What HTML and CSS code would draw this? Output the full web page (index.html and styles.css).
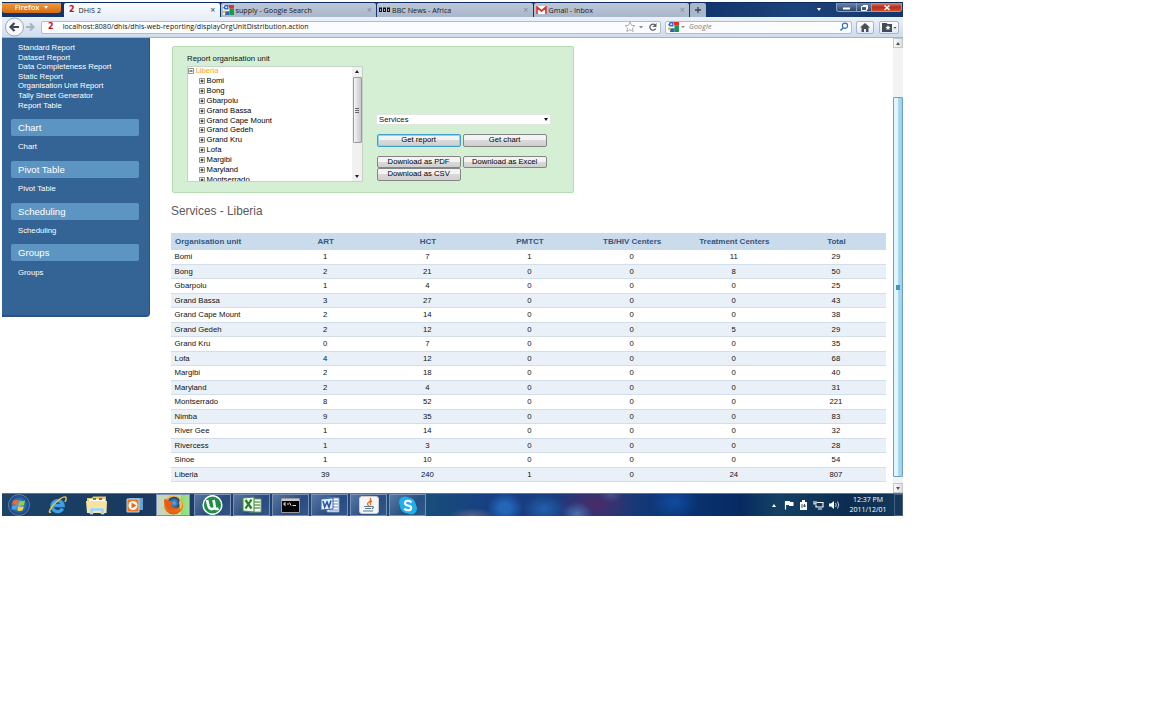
FILE: index.html
```
<!DOCTYPE html>
<html lang="en">
<head>
<meta charset="utf-8">
<title>DHIS 2</title>
<link rel="stylesheet" href="styles.css">
</head>
<body>
<svg width="0" height="0" class="defs">
  <defs>
    <linearGradient id="orange" x2="0" y2="1"><stop stop-color="#ffb347"/><stop offset="1" stop-color="#e05a08"/></linearGradient>
    <radialGradient id="globe"><stop stop-color="#58b4ee"/><stop offset="1" stop-color="#123a78"/></radialGradient>
    <symbol id="google" viewBox="0 0 12 11"><path fill="#fff" d="M0 0h12v11H0z"/><path fill="#2b62d1" d="M2 0h4v5H2L0 3z"/><circle cx="3.500" cy="2.500" r="1.200" fill="#e8effc"/><path fill="#e22c25" d="M6 0h6v4H7z"/><path fill="#159a45" d="M7 4h5v7H7z"/><path fill="#f4bd25" d="M0 6h3v3H0z"/><path fill="#2c62cc" d="M3 7h4v4H2z"/></symbol>
    <symbol id="plus" viewBox="0 0 6 6"><path d="M.5.5h5v5h-5z" fill="#fff" stroke="#777" stroke-width=".8"/><path d="M1.500 3h3M3 1.500v3" stroke="#111" stroke-width="1"/></symbol>
  </defs>
</svg>
<div class="screen">
  <header class="tabs">
    <div class="firefox">Firefox <i class="down"></i></div>
    <div class="tab active"><b class="two">2</b><span>DHIS 2</span><em>×</em></div>
    <div class="tab"><svg class="fav" width="11" height="10"><use href="#google"/></svg><span>supply - Google Search</span><em>×</em></div>
    <div class="tab"><svg class="fav" width="11" height="6" viewBox="0 0 11 6"><path d="M0 .5h3v4.500H0zM4 .5h3v4.500H4zM8 .5h3v4.500H8z" fill="#111"/><path d="M1 2h1v2H1zM5 2h1v2H5zM9 2h1v2H9z" fill="#aaa"/></svg><span>BBC News - Africa</span><em>×</em></div>
    <div class="tab"><svg class="fav" width="11" height="8" viewBox="0 0 11 8"><path fill="#fff" d="M0 0h11v8H0z"/><path d="M1 8V1l4.500 4L10 1v7" fill="none" stroke="#dc3832" stroke-width="1.700"/></svg><span>Gmail - Inbox</span><em>×</em></div>
    <div class="newtab"><svg width="8" height="8" viewBox="0 0 8 8"><path d="M4 1v6M1 4h6" stroke="#3c4655" stroke-width="1.300"/></svg></div>
    <i class="down tablist"></i>
    <div class="winbtns">
      <span><svg width="19" height="10"><path d="M6 5.500h7" stroke="#fff" stroke-width="2"/></svg></span>
      <span><svg width="14" height="10"><path d="M4.500 3.500h5v4h-5zM6 2.500h4.500v4" fill="none" stroke="#fff"/></svg></span>
      <span class="close"><svg width="29" height="10"><path d="M12.500 2.500l5 4.500m0-4.500l-5 4.500" stroke="#fff" stroke-width="1.500"/></svg></span>
    </div>
  </header>
  <nav class="navbar">
    <svg class="arrows" width="34" height="20" viewBox="0 0 34 20"><circle cx="12.500" cy="10" r="9" fill="#f7f9fc" stroke="#9ba8ba"/><path d="M17 10H9M12.500 6L8.500 10l4 4" fill="none" stroke="#3f4753" stroke-width="2.200"/><path d="M24 10h7M28 6.500l3.500 3.500-3.500 3.500" fill="none" stroke="#a9b2bf" stroke-width="2"/></svg>
    <div class="url"><b class="two">2</b><span>localhost:8080/dhis/dhis-web-reporting/displayOrgUnitDistribution.action</span>
      <svg class="urlicons" width="36" height="12" viewBox="0 0 36 12"><path d="M6 1l1.500 3.300 3.500.3-2.600 2.400.8 3.500L6 8.700l-3.200 1.800.8-3.500L1 4.600l3.500-.3z" fill="#fff" stroke="#a5a5a5" stroke-width=".9"/><path d="M15 5h4l-2 2.500z" fill="#888"/><path d="M31 4a3 3 0 1 0 .6 3.500" fill="none" stroke="#5c6168" stroke-width="1.300"/><path d="M32.500 2v4h-4z" fill="#5c6168"/></svg>
    </div>
    <div class="search"><svg width="11" height="10"><use href="#google"/></svg><i class="down grey"></i><span>Google</span><svg class="mag" width="10" height="10"><circle cx="6" cy="3.700" r="2.600" fill="none" stroke="#3a72ad" stroke-width="1.200"/><path d="M4 6L1.500 8.500" stroke="#3a72ad" stroke-width="1.600"/></svg></div>
    <div class="navbtn home"><svg width="10" height="9" viewBox="0 0 10 9"><path d="M5 0l5 4.500H8.500V9H6V6H4v3H1.500V4.500H0z" fill="#48505c"/></svg></div>
    <div class="navbtn mark"><svg width="15" height="9" viewBox="0 0 15 9"><path d="M0 0h4.500l1 1H10v8H0z" fill="#434b58"/><path d="M6 2l.8 1.800 1.700.2-1.300 1.200.4 1.800L6 6.100 4.400 7l.4-1.800L3.500 4l1.700-.2z" fill="#fff"/><path d="M11.500 4h3L13 5.800z" fill="#444"/></svg></div>
  </nav>
  <main class="page">
    <aside class="menu">
      <ul><li>Standard Report</li><li>Dataset Report</li><li>Data Completeness Report</li><li>Static Report</li><li>Organisation Unit Report</li><li>Tally Sheet Generator</li><li>Report Table</li></ul>
      <h2>Chart</h2><p>Chart</p>
      <h2>Pivot Table</h2><p>Pivot Table</p>
      <h2>Scheduling</h2><p>Scheduling</p>
      <h2>Groups</h2><p>Groups</p>
    </aside>
    <section class="content">
      <div class="criteria">
        <div class="unit">
          <label>Report organisation unit</label>
          <div class="treebox">
            <ul class="tree">
              <li class="root"><svg width="6" height="6" viewBox="0 0 6 6"><path d="M.5.5h5v5h-5z" fill="#fff" stroke="#777" stroke-width=".8"/><path d="M1.500 3h3" stroke="#111"/></svg>Liberia</li>
              <li><svg width="6" height="6"><use href="#plus"/></svg>Bomi</li><li><svg width="6" height="6"><use href="#plus"/></svg>Bong</li><li><svg width="6" height="6"><use href="#plus"/></svg>Gbarpolu</li><li><svg width="6" height="6"><use href="#plus"/></svg>Grand Bassa</li><li><svg width="6" height="6"><use href="#plus"/></svg>Grand Cape Mount</li><li><svg width="6" height="6"><use href="#plus"/></svg>Grand Gedeh</li><li><svg width="6" height="6"><use href="#plus"/></svg>Grand Kru</li><li><svg width="6" height="6"><use href="#plus"/></svg>Lofa</li><li><svg width="6" height="6"><use href="#plus"/></svg>Margibi</li><li><svg width="6" height="6"><use href="#plus"/></svg>Maryland</li><li><svg width="6" height="6"><use href="#plus"/></svg>Montserrado</li>
            </ul>
            <div class="treebar"><i class="up"></i><div class="treethumb"><i class="grip"></i></div><i class="down"></i></div>
          </div>
        </div>
        <div class="controls">
          <div class="select">Services<i class="down"></i></div>
          <div class="btns"><span class="btn focus">Get report</span><span class="btn">Get chart</span></div>
          <div class="btns"><span class="btn">Download as PDF</span><span class="btn">Download as Excel</span><span class="btn">Download as CSV</span></div>
        </div>
      </div>
      <h1>Services - Liberia</h1>
      <table>
        <thead><tr><th>Organisation unit</th><th>ART</th><th>HCT</th><th>PMTCT</th><th>TB/HIV Centers</th><th>Treatment Centers</th><th>Total</th></tr></thead>
        <tbody>
        <tr><td>Bomi</td><td>1</td><td>7</td><td>1</td><td>0</td><td>11</td><td>29</td></tr>
        <tr><td>Bong</td><td>2</td><td>21</td><td>0</td><td>0</td><td>8</td><td>50</td></tr>
        <tr><td>Gbarpolu</td><td>1</td><td>4</td><td>0</td><td>0</td><td>0</td><td>25</td></tr>
        <tr><td>Grand Bassa</td><td>3</td><td>27</td><td>0</td><td>0</td><td>0</td><td>43</td></tr>
        <tr><td>Grand Cape Mount</td><td>2</td><td>14</td><td>0</td><td>0</td><td>0</td><td>38</td></tr>
        <tr><td>Grand Gedeh</td><td>2</td><td>12</td><td>0</td><td>0</td><td>5</td><td>29</td></tr>
        <tr><td>Grand Kru</td><td>0</td><td>7</td><td>0</td><td>0</td><td>0</td><td>35</td></tr>
        <tr><td>Lofa</td><td>4</td><td>12</td><td>0</td><td>0</td><td>0</td><td>68</td></tr>
        <tr><td>Margibi</td><td>2</td><td>18</td><td>0</td><td>0</td><td>0</td><td>40</td></tr>
        <tr><td>Maryland</td><td>2</td><td>4</td><td>0</td><td>0</td><td>0</td><td>31</td></tr>
        <tr><td>Montserrado</td><td>8</td><td>52</td><td>0</td><td>0</td><td>0</td><td>221</td></tr>
        <tr><td>Nimba</td><td>9</td><td>35</td><td>0</td><td>0</td><td>0</td><td>83</td></tr>
        <tr><td>River Gee</td><td>1</td><td>14</td><td>0</td><td>0</td><td>0</td><td>32</td></tr>
        <tr><td>Rivercess</td><td>1</td><td>3</td><td>0</td><td>0</td><td>0</td><td>28</td></tr>
        <tr><td>Sinoe</td><td>1</td><td>10</td><td>0</td><td>0</td><td>0</td><td>54</td></tr>
        <tr><td>Liberia</td><td>39</td><td>240</td><td>1</td><td>0</td><td>24</td><td>807</td></tr>
        </tbody>
      </table>
    </section>
    <div class="scrollbar"><div class="sbtn"><i class="up"></i></div><div class="track"><div class="thumb"><i class="grip"></i></div></div><div class="sbtn"><i class="down"></i></div></div>
  </main>
  <footer class="taskbar">
    <div class="app start"><svg width="24" height="22" viewBox="0 0 24 22"><circle cx="12" cy="11" r="10.500" fill="url(#globe)" stroke="#6996b8" stroke-width=".8"/><path d="M6 7q3-2 5.500-.5L10.500 11Q8 9.500 5 11z" fill="#f06a2b"/><path d="M12.500 6.500Q15 8 18 6.500L17 11q-3 1.500-5.500.3z" fill="#9ccc3c"/><path d="M5 12q2.500-1.500 5.300 0L9.300 16Q7 14.500 4.500 16z" fill="#4ba3e6"/><path d="M11.300 12.300q2.500 1.200 5.500 0L15.800 16q-2.800 1.700-5.500.5z" fill="#fbd13a"/></svg></div>
    <div class="app ie"><svg width="22" height="21" viewBox="0 0 22 21"><path d="M15.500 13.500A5.500 5.500 0 1 1 16 10.500H6" fill="none" stroke="#3f9fe6" stroke-width="3.400"/><path d="M4 17C0 19 4 11 11 5.500S21 1 18 7" fill="none" stroke="#f3c63a" stroke-width="1.500"/></svg></div>
    <div class="app folder"><svg width="22" height="19" viewBox="0 0 22 19"><path d="M1 2h5l1-1.500h13V17H1z" fill="#e9c96b"/><path d="M3 3h16v3H3z" fill="#fff"/><path d="M7 2h3v2H7z" fill="#3c9a50"/><path d="M13 2h3v2h-3z" fill="#d84a35"/><path d="M0 5h21l-.5 12H1z" fill="#f7e3a0"/><path d="M4 18v-6h14v6h-3v-3H7v3z" fill="#9bd0ee" stroke="#d8eefa" stroke-width=".6"/></svg></div>
    <div class="app media"><svg width="18" height="16" viewBox="0 0 18 16"><path d="M3 1h14v12H3z" fill="#62a6d3"/><path d="M1 2h12v13H1z" fill="#f2731c" stroke="#b4d8ee"/><circle cx="7" cy="8.500" r="4.500" fill="#fff"/><path d="M5.500 5.500v6l5-3z" fill="#ee6814"/></svg></div>
    <div class="app win fox"><svg width="21" height="20" viewBox="0 0 21 20"><circle cx="10.500" cy="10" r="9.500" fill="url(#orange)"/><circle cx="11" cy="8" r="6.300" fill="url(#globe)"/><path d="M1 5q2-2 3 0l4 1 2 2-2 2q2 4 7 2-3 5-9 3Q1 12 1 5z" fill="#e85b12"/><path d="M17 4q4 6 0 11 0-5-1-7z" fill="#ffc531"/></svg></div>
    <div class="app win"><svg width="21" height="20" viewBox="0 0 21 20"><circle cx="10.500" cy="10" r="9.300" fill="#1f8f45" stroke="#fff" stroke-width="1.500"/><path d="M5 5l1.500 6q1 3.500 4 3 3-.5 2-4L11.500 5m1 7q1 3 4 1.500" fill="none" stroke="#fff" stroke-width="2.700"/></svg></div>
    <div class="app win"><svg width="20" height="18" viewBox="0 0 20 18"><path d="M7 3h12v13H7z" fill="#f8fbf5" stroke="#7a9c6a"/><path d="M10 6h8M10 9h8M10 12h8" stroke="#66a852" stroke-width="1.300"/><path d="M1 2l11-1v15L1 15z" fill="#eef7e8" stroke="#41903b"/><path d="M3.500 4l6 8.500m0-9l-6 9" stroke="#24812b" stroke-width="2.200"/></svg></div>
    <div class="app win"><svg width="19" height="15" viewBox="0 0 19 15"><path d="M.5.5h18v14H.5z" fill="#050505" stroke="#999"/><path d="M1 1h17v2H1z" fill="#c8c8c8"/><path d="M5 5H3v2h2M7 5v2M8.500 4.500l1.500 3M11.500 7.500H15" fill="none" stroke="#fff" stroke-width=".9"/></svg></div>
    <div class="app win"><svg width="20" height="18" viewBox="0 0 20 18"><path d="M7 2h12v14H7z" fill="#fff" stroke="#8298c0"/><path d="M12 5h6M12 8h6M12 11h6M9 14h9" stroke="#5b82c4" stroke-width="1.200"/><path d="M1 3l12-1v11L1 14z" fill="#e9f0fb" stroke="#3565ad"/><path d="M3 5l1.700 6L7 6l2 5 2-6.500" fill="none" stroke="#2458aa" stroke-width="1.600"/></svg></div>
    <div class="app win"><svg width="20" height="18" viewBox="0 0 20 18"><rect x=".5" y=".5" width="19" height="17" rx="2.500" fill="#f5f5f5" stroke="#ccc"/><path d="M11 2q2 2-1 4t0 4M13 5q-3 2-1 4" fill="none" stroke="#e36a25" stroke-width="1.300"/><path d="M5 10.500h8M6 12.500h6M4 15h10M13 10.500q3 0 0 2.500" fill="none" stroke="#5a7892" stroke-width="1.100"/></svg></div>
    <div class="app win"><svg width="20" height="19" viewBox="0 0 20 19"><circle cx="7" cy="6.500" r="6" fill="#1eb0ed"/><circle cx="13" cy="12.500" r="6" fill="#1eb0ed"/><circle cx="10" cy="9.500" r="8" fill="#1eb0ed"/><path d="M13.500 6.500Q12 4.500 9.500 4.700T7 7.200Q7 9 10 9.500t3.200 2.300q0 2.500-3 2.500T6.500 12.500" fill="none" stroke="#fff" stroke-width="2.100"/></svg></div>
    <div class="tray">
      <i class="up"></i>
      <svg width="10" height="10" viewBox="0 0 10 10"><path d="M1.500 1v8.500" stroke="#fff" stroke-width="1.200"/><path d="M2 1h4v1h3.500v4H5V5H2z" fill="#fff"/></svg>
      <svg width="9" height="10" viewBox="0 0 9 10"><path d="M1 2h2V0h3v2h2v8H1z" fill="#fff"/><path d="M3 4v4M4 6h3M5.500 4v3" stroke="#3e5570"/></svg>
      <svg width="11" height="10" viewBox="0 0 11 10"><path d="M4 2.500h6v4.500H3V5M1 1v3h2V1M5 9h4" fill="none" stroke="#fff" stroke-width="1.100"/></svg>
      <svg width="11" height="10" viewBox="0 0 11 10"><path d="M0 3.500h2L5 1v8L2 6.500H0z" fill="#fff"/><path d="M6.500 3q1.500 2 0 4M8.500 1.500q2.500 3.500 0 7" fill="none" stroke="#dbe4ed" stroke-width=".9"/></svg>
    </div>
    <div class="clock"><div>12:37 PM</div><div>2011/12/01</div></div>
    <div class="desktop"></div>
  </footer>
</div>
</body>
</html>
```
FILE: styles.css
```
* { box-sizing: border-box; }
body { margin: 0; background: #fff; font-family: "Liberation Sans", Arial, sans-serif; }
.defs { position: absolute; }
svg { display: block; flex: none; }
ul { list-style: none; margin: 0; padding: 0; }
.screen { width: 901px; height: 514px; margin: 2px 0 0 2px; display: flex; flex-direction: column; overflow: hidden; white-space: nowrap; }
.up, .down { display: block; flex: none; width: 0; height: 0; border: 2.5px solid transparent; }
.down { border-top: 3px solid currentColor; border-bottom: 0; }
.up { border-bottom: 3px solid currentColor; border-top: 0; }

/* Browser chrome */
.tabs { height: 15px; flex: none; display: flex; background: linear-gradient(90deg, #12366b 0, #12366b 78%, #1c437b 88%, #12366b); border-top: 1px solid #0b2c5d; font: 7.2px/12px "Open Sans", sans-serif; color: #1a1a1a; }
.firefox { width: 59px; height: 10px; margin-right: 2px; background: linear-gradient(#ee9a3e, #d66c10); border-radius: 0 0 3px 3px; color: #fff; font-weight: 600; font-size: 7.4px; line-height: 8px; display: flex; justify-content: center; align-items: flex-start; gap: 5px; }
.firefox .down { margin-top: 3px; }
.tab { width: 155.5px; height: 14px; margin-left: 1px; padding: 0 4px 1px 2px; display: flex; align-items: center; gap: 2px; background: linear-gradient(#bcc8d9, #a9b6c9); border-radius: 2px 2px 0 0; }
.tab.active { background: linear-gradient(#fafcff, #e9f0f9); padding-left: 5px; gap: 4px; }
.tab em { margin-left: auto; font-style: normal; font-size: 9px; color: #7f8b9b; }
.tab.active em { color: #444; }
.two { color: #c41220; font: bold 8px/10px "DejaVu Sans", sans-serif; }
.newtab { width: 16px; height: 14px; margin-left: 1px; background: #a9b7cb; display: flex; align-items: center; justify-content: center; border-radius: 2px 2px 0 0; }
.tablist { color: #fff; margin: 5px 0 0 111px; }
.winbtns { display: flex; margin-left: 15px; height: 9px; border: 1px solid #8ba0bd; border-top: 0; border-radius: 0 0 3px 3px; overflow: hidden; background: linear-gradient(#7188a9, #29456f); }
.winbtns span + span { border-left: 1px solid #8ba0bd; }
.winbtns .close { background: linear-gradient(#d38b80, #b52d16 50%, #cf4b2b); }
.navbar { height: 21px; flex: none; display: flex; align-items: center; background: linear-gradient(#ebf1f9, #cfdcec); border-bottom: 1px solid #a4b3c7; font: 7px/12px "Open Sans", sans-serif; }
.arrows { margin-right: 5px; }
.url, .search { height: 13px; background: #fbfcfe; border: 1px solid #b0bdce; border-radius: 2px; display: flex; align-items: center; color: #111; }
.url { width: 620px; padding-left: 6px; gap: 9px; letter-spacing: .085px; }
.urlicons { margin-left: auto; }
.search { width: 187px; margin-left: 4px; padding: 0 2px; gap: 2px; }
.search span { font-style: italic; color: #777; margin-left: 2px; letter-spacing: .2px; }
.mag { margin-left: auto; }
.grey { color: #888; border-width: 2px; border-bottom: 0; }
.navbtn { height: 13px; border: 1px solid #a9b5c5; border-radius: 2px; background: linear-gradient(#fcfdff, #e2eaf4); display: flex; align-items: center; justify-content: center; }
.home { width: 18px; margin-left: 4px; }
.mark { width: 20px; margin-left: 5px; }

/* Report page */
.page { height: 455px; flex: none; display: flex; align-items: flex-start; }
.menu { width: 148px; height: 279px; padding: 5px 10px 0 9px; background: #336495; border-right: 1px solid #285480; border-bottom: 2px solid #285480; border-radius: 0 0 4px 0; color: #fff; font-size: 7.75px; }
.menu ul { padding-left: 7px; line-height: 9.6px; }
.menu h2 { height: 17px; margin: 8.8px 0 0; padding-left: 7px; background: #5d95c2; border-radius: 2px; font-size: 9.6px; line-height: 17px; font-weight: normal; }
.menu p { margin: 6.4px 0 0 7px; height: 9.6px; line-height: 9px; }
.content { width: 737px; padding: 8px 0 0 21px; }
.criteria { width: 402px; height: 147px; margin-left: 1px; border: 1px solid #b3dcb2; border-radius: 2px; background: #d5efd5; display: flex; font-size: 7.7px; color: #111; }
.unit { width: 176px; margin: 7px 0 0 14px; }
.unit label { display: block; height: 12px; line-height: 10px; font-size: 7.8px; }
.treebox { height: 116px; border: 1px solid #c8d2c8; background: #fff; display: flex; overflow: hidden; }
.tree { flex: 1; margin-top: -.7px; line-height: 9.87px; overflow: hidden; }
.tree li { height: 9.87px; display: flex; align-items: center; gap: 1.500px; padding-left: 11px; color: #000; }
.tree .root { padding-left: 0; color: #ffa51e; }
.treebar { width: 10px; background: #f1f1f1; display: flex; flex-direction: column; align-items: center; padding: 3px 0; color: #222; }
.treethumb { width: 9px; height: 66px; margin: 4px 0 auto; border: 1px solid #999; border-radius: 1px; background: linear-gradient(90deg, #f5f5f5, #c8c8cc); display: flex; align-items: center; justify-content: center; }
.grip { width: 4px; height: 5px; background: repeating-linear-gradient(#666 0 1px, transparent 1px 2px); }
.controls { width: 180px; margin: 67px 0 0 13px; }
.select { width: 175px; height: 11px; background: #fff; border: 1px solid #e2e6e2; padding: 0 2px; line-height: 9px; display: flex; align-items: center; justify-content: space-between; }
.btns { display: flex; flex-wrap: wrap; column-gap: 2px; margin: 9px 0 0 .6px; }
.btn { width: 84px; height: 12.500px; border: 1px solid #858585; border-radius: 2px; background: linear-gradient(#f3f3f3 0 45%, #dadada 50%, #cfcfcf); text-align: center; line-height: 10px; font-size: 7.7px; color: #000; }
.focus { border-color: #3c9fce; box-shadow: inset 0 0 0 1px #8fd3ee; }
h1 { margin: 9.5px 0 0; height: 30.500px; font-size: 11.85px; line-height: 16px; font-weight: normal; color: #5a5a5a; }
table { width: 715px; border-collapse: separate; border-spacing: 0; table-layout: fixed; font-size: 7.75px; color: #111; }
th, td { padding: 0 0 0 3px; text-align: center; }
th { height: 17px; background: #cadceb; color: #35557f; font-weight: bold; font-size: 8px; }
th:first-child { text-align: left; padding-left: 4px; }
td { height: 14.500px; line-height: 13px; border-bottom: 1px solid #d3deeb; padding-left: 2px; }
td:first-child { text-align: left; padding-left: 3.600px; }
tbody tr:nth-child(even) { background: #eaf0f7; }
.scrollbar { width: 10px; height: 455px; margin-left: 6px; background: #f3f3f3; display: flex; flex-direction: column; }
.sbtn { height: 10px; border: 1px solid #c4c8cd; background: linear-gradient(90deg, #fafafa, #dcdfe2); display: flex; align-items: center; justify-content: center; color: #555; }
.track { flex: 1; padding-top: 49px; }
.thumb { height: 380px; border: 1px solid #6f9fbd; border-radius: 1px; background: linear-gradient(90deg, #e2f5fd 0 45%, #a9dcf4 50%, #9bd0ec); display: flex; align-items: center; justify-content: center; }
.thumb .grip { background: #4c94b5; }

/* Windows taskbar */
.taskbar { height: 23px; flex: none; display: flex; align-items: center; border-top: 1px solid #617591; color: #fff;
  background:
    radial-gradient(ellipse 18px 16px at 503px 14px, #2465b8 30%, transparent),
    radial-gradient(ellipse 22px 15px at 542px 15px, #235fae, transparent),
    radial-gradient(ellipse 16px 12px at 575px 20px, #4c70ae, transparent),
    radial-gradient(ellipse 40px 25px at 594px 10px, #4b2b69, transparent),
    radial-gradient(ellipse 12px 8px at 608px 1px, #476eae, transparent),
    radial-gradient(ellipse 24px 18px at 672px 8px, #124a9d, transparent),
    radial-gradient(ellipse 24px 8px at 470px 22px, #59658c, transparent),
    linear-gradient(90deg, #1c4468 0, #19395f 15%, #22457a 35%, #184e7a 47%, #173d82 55%, #1b3b78 68%, #0a3475 75%, #082a61 82%, #134064 86%, #0c2c50 94%, #123a5c); }
.app { width: 39px; height: 22px; flex: none; display: flex; align-items: center; justify-content: center; }
.start { width: 34px; }
.ie { width: 43px; }
.folder { width: 36px; }
.media { width: 39px; }
.win { width: 37px; margin-right: 2px; border: 1px solid #7990b4; background: linear-gradient(135deg, #7590b8aa, #2e4f83aa 60%, #3b5f94aa); }
.fox { width: 34px; margin: 0 4px 0 2px; background: linear-gradient(90deg, #c7d4c1, #b8e2a5 74%, #8bdc72 75%, #a1df93); }
.tray { margin-left: auto; display: flex; align-items: center; gap: 5px; }
.tray .up { margin-right: 3px; }
.clock { width: 40px; margin-left: 8px; font: 7px/9.5px "Open Sans", sans-serif; text-align: center; padding-bottom: 1px; }
.desktop { width: 9px; height: 22px; margin-left: 6px; border: 1px solid #46617d; background: #17385b; }
```
